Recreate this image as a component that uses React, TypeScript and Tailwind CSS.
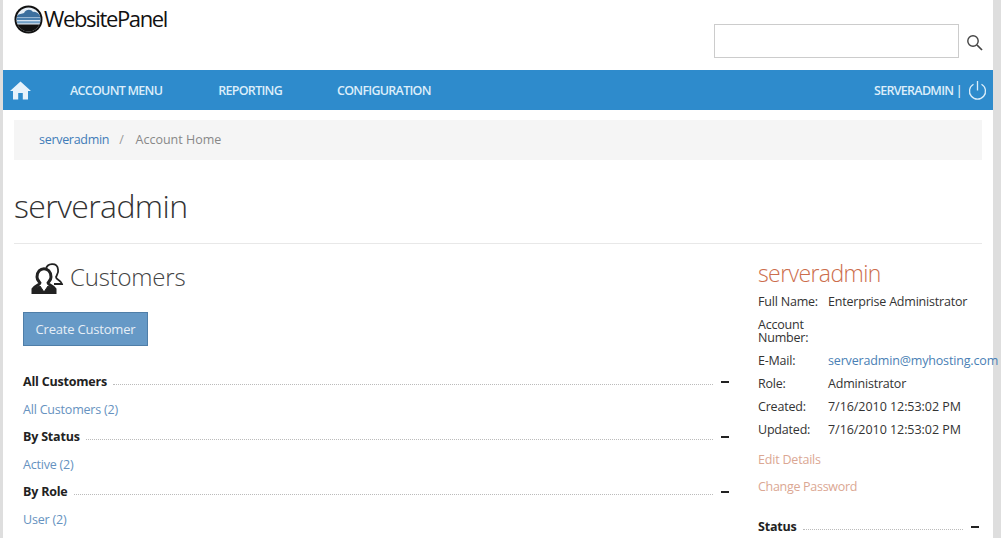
import React from "react";

function Logo() {
  return (
    <svg width="29" height="29" viewBox="0 0 29 29" className="shrink-0">
      <defs>
        <clipPath id="c"><circle cx="14.5" cy="14.5" r="12" /></clipPath>
      </defs>
      <circle cx="14.5" cy="14.5" r="14" fill="#111" />
      <g clipPath="url(#c)">
        <rect x="0" y="0" width="29" height="29" fill="#e8eff6" />
        <path d="M2 12 C5 8 8 9 10 8 C12 4 17 4 19 7 C22 6 25 9 27 12 Z" fill="#3d6f9e" />
        <rect x="0" y="12.5" width="29" height="2.6" fill="#4b7fae" />
        <rect x="0" y="16.2" width="29" height="2.2" fill="#6f9dc4" />
        <rect x="0" y="19.5" width="29" height="9" fill="#111" />
      </g>
    </svg>
  );
}

function Section({ title, link }: { title: string; link: string }) {
  return (
    <>
      <Heading title={title} />
      <a className="block h-[32px] pt-[8px] text-[12.5px] leading-[17px] text-[#6692c0]">{link}</a>
    </>
  );
}

function Heading({ title }: { title: string }) {
  return (
    <div className="flex h-[23px] items-center">
      <span className="text-[12.5px] font-bold leading-[17px] text-[#222]">{title}</span>
      <span className="ml-[6px] mt-[6px] flex-1 border-b border-dotted border-[#bbb]" />
      <span className="ml-[8px] h-[2px] w-[8px] bg-[#222]" />
    </div>
  );
}

function Row({ label, children }: { label: React.ReactNode; children?: React.ReactNode }) {
  return (
    <div className="flex text-[12.5px] leading-[13px] text-[#333]">
      <div className="w-[70px] shrink-0">{label}</div>
      <div className="whitespace-nowrap">{children}</div>
    </div>
  );
}

export default function App() {
  return (
    <div className="h-[538px] w-[1001px] overflow-hidden bg-[#dedede] pl-[3px] font-['Open_Sans','Noto_Sans',sans-serif] tracking-[-0.2px]">
      <div className="h-full w-[990px] bg-white">
        <header className="flex h-[70px] justify-between">
          <div className="flex items-start pl-[11px] pt-[5px]">
            <Logo />
            <span className="ml-[1px] -mt-[1px] text-[22px] leading-[28px] tracking-[-1.35px] text-[#111]">WebsitePanel</span>
          </div>
          <div className="flex items-start pr-[10px] pt-[24px]">
            <input className="h-[34px] w-[245px] border border-[#ccc] bg-white" />
            <svg width="17" height="17" viewBox="0 0 17 17" className="ml-[7px] mt-[10px]" fill="none" stroke="#444" strokeWidth="1.4">
              <circle cx="7" cy="7" r="5.2" />
              <path d="M11 11l5 5" strokeWidth="1.7" />
            </svg>
          </div>
        </header>

        <nav className="flex h-[40px] items-center justify-between bg-[#2e8bcc] pt-[2px] text-[12.5px] font-semibold tracking-[-0.72px] text-[#dceefa]">
          <div className="flex items-center">
            <svg width="21" height="19" viewBox="0 0 21 19" className="ml-[7px] -mt-[2px]" fill="#e6f2fb">
              <path d="M10.5 0.5 L0 10 L3 10 L3 18.5 L8.2 18.5 L8.2 12 L12.8 12 L12.8 18.5 L18 18.5 L18 10 L21 10 Z" />
            </svg>
            <span className="ml-[39px]">ACCOUNT MENU</span>
            <span className="ml-[56px]">REPORTING</span>
            <span className="ml-[55px]">CONFIGURATION</span>
          </div>
          <div className="flex items-center pr-[6px]">
            <span>SERVERADMIN |</span>
            <svg width="19" height="21" viewBox="0 0 19 21" className="ml-[6px] -mt-[2px]" fill="none" stroke="#dceefa" strokeWidth="1.3">
              <path d="M5.5 4.2 A8 8 0 1 0 13.5 4.2" />
              <path d="M9.5 1 V10.5" />
            </svg>
          </div>
        </nav>

        <div className="mx-[11px] mt-[10px] flex h-[40px] items-center bg-[#f5f5f5] pl-[25px] text-[12.5px]">
          <a className="text-[#3f7cb8] tracking-[-0.3px]">serveradmin</a>
          <span className="ml-[10px] text-[#999]">/</span>
          <span className="ml-[12px] tracking-[0px] text-[#888]">Account Home</span>
        </div>

        <h1 className="mx-[11px] mt-[23px] h-[61px] border-b border-[#e8e8e8] text-[32px] font-light leading-[46px] tracking-[-0.6px] text-[#333]">
          serveradmin
        </h1>

        <div className="flex">
          <main className="ml-[20px] w-[706px]">
            <div className="flex h-[59px] items-center pl-[7px] pt-[6px]">
              <svg width="34" height="34" viewBox="0 0 34 34" fill="none" stroke="#222">
                <path d="M16 9 C17 3 27 2 28 9 C29 13 27 15 26 17 C26 20 31 20 32 24 L24 24" strokeWidth="1.8" />
                <path d="M7 17 C7 6 21 6 21 17 C21 20 19 21 18 23 C18 25 24 26 25 29 V33 H3 V29 C4 26 10 25 10 23 C9 21 7 20 7 17 Z" strokeWidth="3" />
                <path d="M3 29 L10 26 L14 32 L18 26 L25 29 V33 H3 Z" fill="#222" strokeWidth="1" />
              </svg>
              <span className="ml-[6px] text-[24px] font-light leading-[30px] tracking-[-0.2px] text-[#444]">Customers</span>
            </div>
            <button className="mt-[9px] block h-[34px] w-[125px] border border-[#4f7ea8] bg-[#6699c6] pt-[1px] text-[13px] text-[#e6eff7]">
              Create Customer
            </button>
            <div className="mt-[24px]">
              <Section title="All Customers" link="All Customers (2)" />
              <Section title="By Status" link="Active (2)" />
              <Section title="By Role" link="User (2)" />
            </div>
          </main>

          <aside className="ml-[29px] w-[221px] pt-[13px]">
            <div className="text-[23px] font-light leading-[32px] tracking-[-0.6px] text-[#cc6d4c]">serveradmin</div>
            <div className="mt-[6px] flex flex-col gap-[10px]">
              <Row label="Full Name:">Enterprise Administrator</Row>
              <Row label={<>Account<br />Number:</>} />
              <Row label="E-Mail:"><span className="text-[#4a7fb5] tracking-[-0.16px]">serveradmin@myhosting.com</span></Row>
              <Row label="Role:">Administrator</Row>
              <Row label="Created:"><span className="tracking-[-0.05px]">7/16/2010 12:53:02 PM</span></Row>
              <Row label="Updated:"><span className="tracking-[-0.05px]">7/16/2010 12:53:02 PM</span></Row>
            </div>
            <a className="mt-[15px] block text-[12.5px] leading-[17px] text-[#dba793]">Edit Details</a>
            <a className="mt-[10px] block text-[12.5px] leading-[17px] tracking-[-0.3px] text-[#dba793]">Change Password</a>
            <div className="mt-[20px]">
              <Heading title="Status" />
            </div>
          </aside>
        </div>
      </div>
    </div>
  );
}
